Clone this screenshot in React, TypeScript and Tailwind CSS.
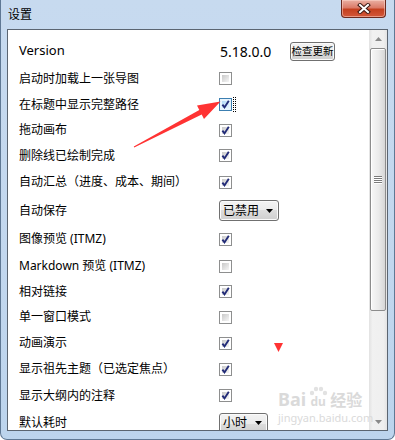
import React from 'react'
import clsx from 'clsx'

type Row =
  | { label: string; kind: 'check'; checked: boolean; focus?: boolean; h: string }
  | { label: string; kind: 'combo'; value: string; w: string; h: string }

const ROWS: Row[] = [
  { label: '启动时加载上一张导图', kind: 'check', checked: false, h: 'h-[27px]' },
  { label: '在标题中显示完整路径', kind: 'check', checked: true, focus: true, h: 'h-[25px]' },
  { label: '拖动画布', kind: 'check', checked: true, h: 'h-[26px]' },
  { label: '删除线已绘制完成', kind: 'check', checked: true, h: 'h-[25px]' },
  { label: '自动汇总（进度、成本、期间）', kind: 'check', checked: true, h: 'h-[28px]' },
  { label: '自动保存', kind: 'combo', value: '已禁用', w: 'w-[60px]', h: 'h-[29px]' },
  { label: '图像预览 (ITMZ)', kind: 'check', checked: true, h: 'h-[28px]' },
  { label: 'Markdown 预览 (ITMZ)', kind: 'check', checked: false, h: 'h-[26px]' },
  { label: '相对链接', kind: 'check', checked: true, h: 'h-[25px]' },
  { label: '单一窗口模式', kind: 'check', checked: false, h: 'h-[26px]' },
  { label: '动画演示', kind: 'check', checked: true, h: 'h-[26px]' },
  { label: '显示祖先主题（已选定焦点）', kind: 'check', checked: true, h: 'h-[26px]' },
  { label: '显示大纲内的注释', kind: 'check', checked: true, h: 'h-[27px]' },
  { label: '默认耗时', kind: 'combo', value: '小时', w: 'w-[49px]', h: 'h-[28px]' },
]

const BTN_BG =
  'bg-[linear-gradient(to_bottom,#f3f3f3_0%,#ebebeb_50%,#dddddd_50%,#cfcfcf_100%)]'

function Check({ checked, focus }: { checked: boolean; focus?: boolean }) {
  return (
    <span className="flex items-center gap-[1px]">
      <span
        className={clsx(
          'relative block h-[13px] w-[13px] border',
          focus ? 'border-[#3c7fb1] bg-[#e8f4fd]' : 'border-[#8e8f8f] bg-white'
        )}
      >
        <span
          className={clsx(
            'absolute inset-[2px]',
            focus
              ? 'bg-gradient-to-br from-[#b3d8f5] to-[#e6f4fd]'
              : 'bg-gradient-to-br from-[#c9c9c9] to-[#f6f6f6]'
          )}
        />
        {checked && (
          <svg className="absolute inset-0" width="11" height="11" viewBox="0 0 11 11">
            <path
              d="M2.4 5.6 L4.5 8.4 L8.8 1.8"
              stroke="#232c78"
              strokeWidth="1.9"
              fill="none"
              strokeLinejoin="miter"
            />
          </svg>
        )}
      </span>
      {focus && <span className="block h-[15px] w-[3px] border border-dotted border-black" />}
    </span>
  )
}

function Combo({ value, w }: { value: string; w: string }) {
  return (
    <span
      className={clsx(
        'flex h-[21px] shrink-0 items-center justify-between rounded-[3px] border border-[#707070] pl-[3px] pr-[5px] text-[12px] shadow-[inset_0_0_0_1px_#fbfbfb]',
        BTN_BG,
        w
      )}
    >
      <span>{value}</span>
      <svg width="7" height="4" viewBox="0 0 7 4">
        <path d="M0 0 H7 L3.5 4 Z" fill="#000" />
      </svg>
    </span>
  )
}

function Scrollbar() {
  return (
    <div className="flex w-[18px] flex-col bg-[linear-gradient(to_right,#e2e2e2,#f1f1f1_20%,#efefef_80%,#e4e4e4)]">
      <div className="flex h-[18px] items-center justify-center">
        <svg width="7" height="4" viewBox="0 0 7 4">
          <path d="M0 4 H7 L3.5 0 Z" fill="#8a8a8a" />
        </svg>
      </div>
      <div className="mx-[1px] flex h-[263px] items-center justify-center rounded-[2px] border border-[#8c8c8c] bg-[linear-gradient(to_right,#f7f7f7,#eaeaea_55%,#d6d6d6)] shadow-[inset_1px_1px_0_#ffffff]">
        <div className="flex w-[8px] flex-col gap-[1px]">
          <span className="block h-[1px] bg-[#7a7a7a] shadow-[0_1px_0_#ffffff]" />
          <span className="block h-[1px] bg-[#7a7a7a] shadow-[0_1px_0_#ffffff]" />
          <span className="block h-[1px] bg-[#7a7a7a] shadow-[0_1px_0_#ffffff]" />
          <span className="block h-[1px] bg-[#7a7a7a] shadow-[0_1px_0_#ffffff]" />
        </div>
      </div>
      <div className="flex-1" />
      <div className="flex h-[17px] items-center justify-center">
        <svg width="7" height="4" viewBox="0 0 7 4">
          <path d="M0 0 H7 L3.5 4 Z" fill="#8a8a8a" />
        </svg>
      </div>
    </div>
  )
}

export default function App() {
  return (
    <div className="relative flex h-[440px] w-[395px] flex-col overflow-hidden rounded-b-[7px] border-x border-b border-[#5f7894] bg-[linear-gradient(to_bottom,#c7daef,#c2d7ee_60%,#bcd4ed)] font-['Noto_Sans','Noto_Sans_CJK_SC',sans-serif] text-black">
      {/* title bar */}
      <div className="flex h-[29px] items-start">
        <span className="self-center pl-[7px] text-[12px]">设置</span>
        <button className="ml-auto mr-[8px] flex h-[18px] w-[45px] items-center justify-center rounded-b-[4px] border border-t-0 border-[#6b2a1f] bg-[linear-gradient(to_bottom,#eab0a3_0%,#db7b68_45%,#c4401f_55%,#d3583a_100%)] shadow-[inset_0_0_0_1px_rgba(255,220,210,0.5)]">
          <svg width="14" height="11" viewBox="0 0 14 11">
            <path d="M3 2 L11 9 M11 2 L3 9" stroke="#3d1a14" strokeWidth="4" strokeLinecap="square" />
            <path d="M3 2 L11 9 M11 2 L3 9" stroke="#ffffff" strokeWidth="2" strokeLinecap="square" />
          </svg>
        </button>
      </div>

      {/* client area */}
      <div className="mx-[6px] flex h-[402px] border border-[#5b6571] bg-white">
        <div className="flex flex-1 flex-col overflow-hidden pl-[11px] pt-[7px]">
          <div className="flex h-[28px] shrink-0 items-center">
            <span className="w-[200px] text-[13px]">Version</span>
            <span className="w-[71px] pl-[1px] text-[14px]">5.18.0.0</span>
            <button
              className={clsx(
                'flex h-[19px] w-[45px] items-center justify-center rounded-[3px] border border-[#707070] text-[10.5px] leading-none shadow-[inset_0_0_0_1px_#fbfbfb]',
                BTN_BG
              )}
            >
              检查更新
            </button>
          </div>
          {ROWS.map((row, key) => (
            <div key={key} className={clsx('flex shrink-0 items-center', row.h)}>
              <span className="w-[200px] text-[12px] leading-none">{row.label}</span>
              {row.kind === 'check' ? (
                <Check checked={row.checked} focus={row.focus} />
              ) : (
                <Combo value={row.value} w={row.w} />
              )}
            </div>
          ))}
        </div>
        <Scrollbar />
      </div>

      {/* watermark */}
      <div className="pointer-events-none absolute left-[277px] top-[386px] flex flex-col text-[#dadada]">
        <div className="flex items-end gap-[2px] leading-none">
          <span className="text-[18px] font-bold">Bai</span>
          <span className="relative flex h-[22px] w-[20px] items-end justify-center">
            <svg className="absolute left-0 top-0" width="20" height="12" viewBox="0 0 20 12">
              <circle cx="4" cy="7" r="2.2" fill="#e2e2e2" />
              <circle cx="8" cy="3" r="2.2" fill="#e2e2e2" />
              <circle cx="13" cy="3" r="2.2" fill="#e2e2e2" />
              <circle cx="17" cy="7" r="2.2" fill="#e2e2e2" />
            </svg>
            <span className="text-[12px] font-bold">du</span>
          </span>
          <span className="text-[16px] font-bold">经验</span>
        </div>
        <span className="mt-[4px] text-[11px] leading-none">jingyan.baidu.com</span>
      </div>

      {/* annotations */}
      <svg className="pointer-events-none absolute left-0 top-0" width="395" height="440" viewBox="0 0 395 440">
        <polygon
          points="133.2,147.6 200.7,114.6 203,119 219.5,101.5 196,105.6 198.3,110 132.8,146.6"
          fill="#ff3333"
        />
        <polygon points="273,343 282,343 277.5,352" fill="#ff3333" />
      </svg>
    </div>
  )
}
